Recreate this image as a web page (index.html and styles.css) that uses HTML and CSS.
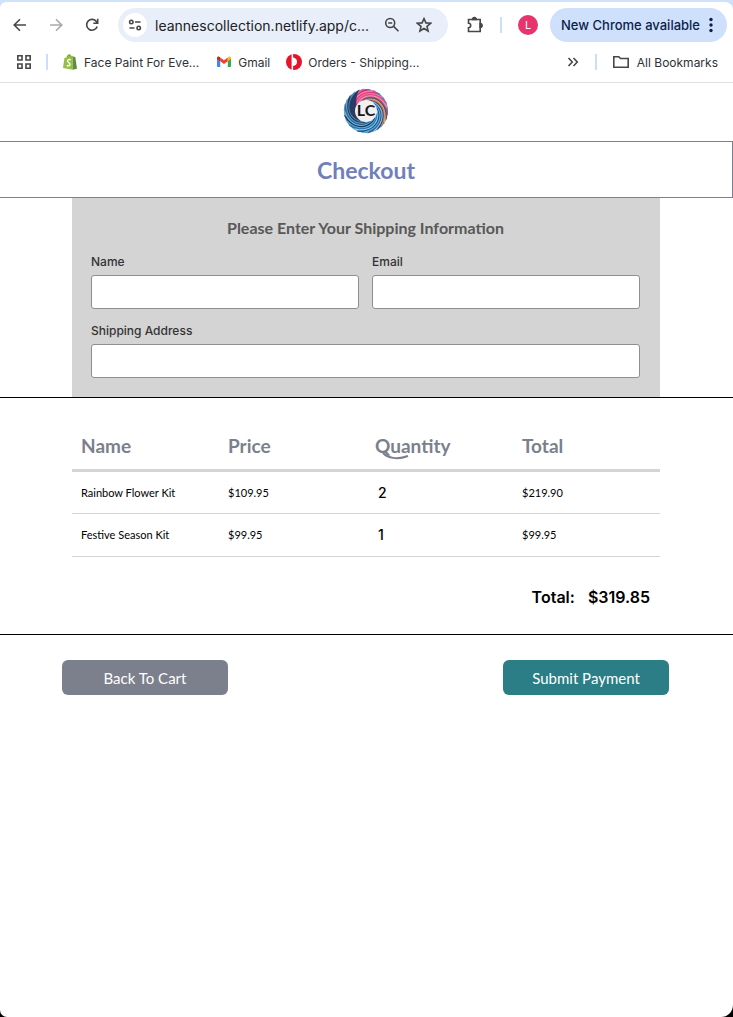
FILE: index.html
```html
<!DOCTYPE html>
<html lang="en">
<head>
<meta charset="utf-8">
<meta name="viewport" content="width=device-width, initial-scale=1">
<title>Checkout</title>
<link rel="stylesheet" href="styles.css">
</head>
<body>
<div class="window">
  <div class="chrome">
    <div class="toolbar">
      <button class="icon-btn" aria-label="Back"><svg width="16" height="16" viewBox="0 0 16 16"><path d="M14 8H2.5M8 2.2 2.2 8 8 13.8"/></svg></button>
      <button class="icon-btn dim" aria-label="Forward"><svg width="16" height="16" viewBox="0 0 16 16"><path d="M2 8h11.500M8 2.200 13.800 8 8 13.800"/></svg></button>
      <button class="icon-btn" aria-label="Reload"><svg width="16" height="16" viewBox="0 0 16 16"><path d="M13.200 9.500A5.400 5.400 0 1 1 12.500 4.700L13.500 6M13.700 1.800V6.200H9.300"/></svg></button>
      <div class="omnibox">
        <button class="site-info" aria-label="Site information"><svg width="14" height="14" viewBox="0 0 14 14"><circle cx="3.300" cy="4" r="1.700"/><path d="M7 4h5.500M1.500 10h5"/><circle cx="10.700" cy="10" r="1.700"/></svg></button>
        <input class="url" type="text" aria-label="Address" value="leannescollection.netlify.app/c...">
        <button class="omni-btn" aria-label="Zoom"><svg width="16" height="16" viewBox="0 0 16 16"><circle cx="6.200" cy="6" r="4.500"/><path d="M9.600 9.400 14.500 14.300M4.200 6h4"/></svg></button>
        <button class="omni-btn" aria-label="Bookmark this tab"><svg width="16" height="16" viewBox="0 0 16 16"><path d="M8 1.700 9.900 5.900 14.600 6.300 11 9.400 12.100 14 8 11.500 3.900 14 5 9.400 1.400 6.300 6.100 5.900Z"/></svg></button>
      </div>
      <button class="icon-btn ext" aria-label="Extensions"><svg width="18" height="18" viewBox="0 0 18 18"><path d="M2.500 3.500h11.700v12H2.500v-3.800a2.200 2.200 0 0 0 0-4.400Z"/><path class="solid" d="M6.500 3.500a1.900 1.900 0 0 1 3.800 0ZM14.200 7.600a1.900 1.900 0 0 1 0 3.800Z"/></svg></button>
      <span class="divider"></span>
      <button class="avatar" aria-label="Profile">L</button>
      <button class="update">New Chrome available<svg width="4" height="16" viewBox="0 0 4 16"><circle cx="2" cy="2.500" r="1.700"/><circle cx="2" cy="8" r="1.700"/><circle cx="2" cy="13.500" r="1.700"/></svg></button>
    </div>
    <nav class="bookmarks" aria-label="Bookmarks">
      <button class="apps" aria-label="Apps"><svg width="16" height="16" viewBox="0 0 16 16"><path d="M1.800 1.800h4.200v4.200H1.800ZM10 1.800h4.200v4.200H10ZM1.800 10h4.200v4.200H1.800ZM10 10h4.200v4.200H10Z"/></svg></button>
      <span class="divider"></span>
      <a class="bookmark shop" href="#"><svg width="16" height="16" viewBox="0 0 16 16"><path fill="#95bf47" d="M2.400 4 4.500 3.400C5 1.500 6.200.300 7.400.300 8.500.300 9 1.100 9.300 2L10.600 1.700 10.900 15.700 1 14.100Z"/><path fill="#5e8e3e" d="M10.600 1.700 11.600 2.700 13.300 3 15 14.700 10.900 15.700Z"/><path fill="none" stroke="#5e8e3e" stroke-width=".7" d="M5.200 3.300C5.600 1.900 6.400 1.100 7.300 1.100S8.500 2 8.400 2.600"/><path fill="none" stroke="#fff" stroke-width="1.400" d="M8.700 5.900C7.300 5.200 5.500 5.600 5.500 7.100c0 1.500 2.600 1.600 2.500 3.300C7.900 12 6 12.200 4.700 11.300"/></svg>Face Paint For Eve...</a>
      <a class="bookmark mail" href="#"><svg width="14" height="12" viewBox="0 0 14 12"><path fill="#4285f4" d="M0 2v8.200c0 .5.400.8.900.8h2.300V4.700Z"/><path fill="#34a853" d="M10.800 4.700V11h2.300c.5 0 .9-.3.900-.8V2Z"/><path fill="#ea4335" d="M3.200 1.500 7 4.300l3.800-2.800v3.700L7 8.100 3.200 5.200Z"/><path fill="#c5221f" d="M0 2.200C0 .500 1.800 0 3.200 1.500v3.700L0 2.800Z"/><path fill="#fbbc04" d="M14 2.200C14 .500 12.200 0 10.800 1.500v3.700L14 2.800Z"/></svg>Gmail</a>
      <a class="bookmark post" href="#"><svg width="16" height="16" viewBox="0 0 16 16"><circle cx="8" cy="8" r="8" fill="#e8132b"/><path fill="#fff" d="M5.600 0H7.100V3.600C9.700 4 11 5.500 11 7.700c0 2.400-1.400 3.900-3.900 4.200V16H5.600Z"/></svg>Orders - Shipping...</a>
      <button class="more" aria-label="More bookmarks"><svg width="12" height="12" viewBox="0 0 12 12"><path d="M1.500 2 5.300 6 1.500 10M6.500 2l3.800 4-3.800 4"/></svg></button>
      <span class="divider"></span>
      <a class="bookmark all" href="#"><svg width="16" height="14" viewBox="0 0 16 14"><path d="M.8 12.200V1.800h5l1.700 1.700h7.700v8.700Z"/></svg>All Bookmarks</a>
    </nav>
  </div>

  <header class="site-header">
    <svg class="logo" viewBox="-23 -23 46 46" role="img" aria-label="LC">
      <defs><path id="strand" d="M-7-9C2-20 19-15 22.500 3 16-6 6-8-7-9Z"/></defs>
      <circle r="22" fill="#4585b3"/>
      <g transform="rotate(-42)">
        <use href="#strand" fill="#ff5a91" transform="rotate(-60)"/>
        <use href="#strand" fill="#c92b6c" transform="rotate(-45)"/>
        <use href="#strand" fill="#ff83aa" transform="rotate(-30)"/>
        <use href="#strand" fill="#e23a7d" transform="rotate(-15)"/>
        <use href="#strand" fill="#ff6f9d" transform="rotate(0)"/>
        <use href="#strand" fill="#d94f86" transform="rotate(15)"/>
        <use href="#strand" fill="#f391ae" transform="rotate(30)"/>
        <use href="#strand" fill="#b04a79" transform="rotate(45)"/>
        <use href="#strand" fill="#35507e" transform="rotate(58)"/>
        <use href="#strand" fill="#f4a35d" transform="rotate(70)"/>
        <use href="#strand" fill="#dd7a4c" transform="rotate(82)"/>
        <use href="#strand" fill="#2b4a78" transform="rotate(95)"/>
        <use href="#strand" fill="#8fc8e4" transform="rotate(108)"/>
        <use href="#strand" fill="#2c5c98" transform="rotate(121)"/>
        <use href="#strand" fill="#5bb4df" transform="rotate(135)"/>
        <use href="#strand" fill="#234a80" transform="rotate(149)"/>
        <use href="#strand" fill="#80cbe8" transform="rotate(163)"/>
        <use href="#strand" fill="#2974ab" transform="rotate(177)"/>
        <use href="#strand" fill="#53afd9" transform="rotate(191)"/>
        <use href="#strand" fill="#1c365f" transform="rotate(205)"/>
        <use href="#strand" fill="#6db8d8" transform="rotate(219)"/>
        <use href="#strand" fill="#2b5e92" transform="rotate(233)"/>
        <use href="#strand" fill="#5fa4c9" transform="rotate(247)"/>
        <use href="#strand" fill="#22365f" transform="rotate(261)"/>
        <use href="#strand" fill="#4b87b0" transform="rotate(275)"/>
        <use href="#strand" fill="#2a3b66" transform="rotate(288)"/>
      </g>
      <circle r="11" fill="#f3eff1"/>
      <text class="logo-text" x="0" y="5" text-anchor="middle">LC</text>
    </svg>
  </header>

  <h1 class="page-title">Checkout</h1>

  <main>
    <section class="band">
      <form class="shipping">
        <h2>Please Enter Your Shipping Information</h2>
        <div class="field"><label for="name">Name</label><input id="name" type="text"></div>
        <div class="field"><label for="email">Email</label><input id="email" type="email"></div>
        <div class="field wide"><label for="address">Shipping Address</label><input id="address" type="text"></div>
      </form>
    </section>

    <section class="band order">
      <table>
        <thead><tr><th scope="col">Name</th><th scope="col">Price</th><th scope="col"><span class="swash">Quantity<svg width="27" height="8" viewBox="0 0 27 8" aria-hidden="true"><path d="M1 1C6 6 15 8 26 4"/></svg></span></th><th scope="col">Total</th></tr></thead>
        <tbody>
          <tr><td>Rainbow Flower Kit</td><td>$109.95</td><td class="qty">2</td><td>$219.90</td></tr>
          <tr><td>Festive Season Kit</td><td>$99.95</td><td class="qty">1</td><td>$99.95</td></tr>
        </tbody>
      </table>
      <p class="grand"><span>Total:</span><span>$319.85</span></p>
    </section>

    <div class="actions">
      <button class="action back">Back To Cart</button>
      <button class="action pay">Submit Payment</button>
    </div>
  </main>
</div>
</body>
</html>
```
FILE: styles.css
```css
* { box-sizing: border-box; }
body { margin: 0; background: #000; font-family: Lato, "Liberation Sans", sans-serif; }
button, input { font: inherit; border: 0; padding: 0; background: none; }
h1, h2, p { margin: 0; }
svg { display: block; flex: none; }

.window { min-height: 100vh; background: #fff; border-radius: 0 0 12px 7px; overflow: hidden; }

/* Browser chrome */
.chrome { background: #d0e1fc; padding-top: 2px; border-bottom: 1px solid #dedfe0; font-family: Inter, sans-serif; color: #303134; }
.toolbar { display: flex; align-items: center; height: 46px; padding: 0 6px 0 2px; background: #fff; border-radius: 6px 8px 0 0; }
.icon-btn { display: grid; place-items: center; flex: none; width: 36px; height: 34px; }
.icon-btn svg, .site-info svg, .omni-btn svg, .apps svg, .more svg, .all svg { fill: none; stroke: #474747; stroke-width: 1.6; }
.icon-btn.dim svg { stroke: #a9a9a9; }
.icon-btn svg .solid { fill: #474747; }
.omnibox { display: flex; align-items: center; flex: 1; min-width: 0; height: 34px; margin-left: 8px; padding: 0 8px 0 5px; background: #e9effa; border-radius: 17px; }
.site-info { display: grid; place-items: center; flex: none; width: 24px; height: 24px; background: #fff; border-radius: 50%; }
.url { flex: 1; min-width: 0; margin-left: 8px; font-size: 14px; color: #202124; }
.omni-btn { display: grid; place-items: center; flex: none; width: 32px; height: 32px; }
.ext { margin-left: 9px; }
.divider { flex: none; width: 2px; height: 16px; background: #cbdffc; }
.toolbar .divider { margin: 0 16px 0 7px; }
.avatar { flex: none; width: 20px; height: 20px; border-radius: 50%; background: #e8336d; color: #fff; font-size: 11px; }
.update { display: flex; align-items: center; gap: 9px; flex: none; height: 34px; margin-left: 12px; padding: 0 14px 0 11px; border-radius: 17px; background: #cfe0fc; color: #0b1f4b; font-size: 13px; font-weight: 500; }
.update svg { fill: #0b1f4b; }
.bookmarks { display: flex; align-items: center; height: 34px; padding: 0 15px 6px 16px; background: #fff; font-size: 12px; }
.bookmark { display: flex; align-items: center; color: inherit; text-decoration: none; white-space: nowrap; }
.apps + .divider { margin: 0 14px; }
.shop { gap: 6px; }
.mail { gap: 7px; margin-left: 18px; }
.post { gap: 6px; margin-left: 16px; }
.all { gap: 8px; margin-left: 16px; }
.more { margin: 0 16px 0 auto; }

/* Store */
.site-header { display: flex; justify-content: center; padding: 5px 1px 7px 0; }
.logo { width: 46px; height: 46px; }
.logo-text { font: 700 16px Lato, sans-serif; fill: #151820; }
.page-title { padding: 1px 0 0; border: 1px solid #7c7f8c; border-left: 0; color: #7180b9; font-size: 23px; line-height: 54px; text-align: center; }
.band { padding: 0 73px 0 72px; border-bottom: 1px solid #000; }
.shipping { display: grid; grid-template-columns: 1fr 1fr; gap: 13px; padding: 18px 20px 19px 19px; background: #d4d4d4; }
.shipping h2 { grid-column: 1 / -1; color: #585858; font-size: 16px; line-height: 24px; text-align: center; }
.field { display: grid; gap: 4px; }
.wide { grid-column: 1 / -1; }
.field label { font: 500 12px/18px Inter, sans-serif; color: #333; }
.field input { width: 100%; height: 34px; padding: 0 8px; background: #fff; border: 1px solid #8f8f8f; border-radius: 3px; }

.order { padding-top: 24px; padding-bottom: 24px; }
table { width: 100%; table-layout: fixed; border-collapse: separate; border-spacing: 0; }
th, td { padding: 0 9px; text-align: left; }
th { height: 50px; border-bottom: 3px solid #d4d4d4; color: #7c7f8c; font-size: 19px; }
td { height: 43px; padding-bottom: 1px; border-bottom: 1px solid #d4d4d4; font-size: 11px; }
tbody tr:first-child td { height: 42px; }
td.qty { padding-left: 12px; font: 500 14px Inter, sans-serif; }
.swash { position: relative; }
.swash svg { position: absolute; left: 7px; bottom: -3px; fill: none; stroke: #7c7f8c; stroke-width: 2; }
.grand { display: flex; justify-content: flex-end; gap: 13px; padding: 28px 10px 1px 0; font: 600 16px/24px Inter, sans-serif; }

.actions { display: flex; justify-content: space-between; padding: 25px 64px 25px 62px; }
.action { width: 166px; height: 35px; border-radius: 6px; color: #fff; font-size: 15px; }
.back { background: #7c7f8c; }
.pay { background: #2b7d86; }
```
